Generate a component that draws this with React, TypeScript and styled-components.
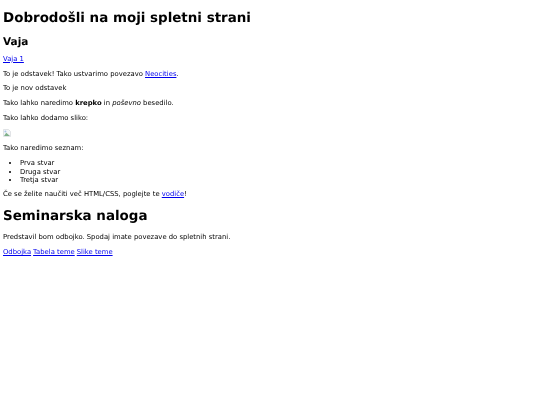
import React from 'react'
import styled, { createGlobalStyle } from 'styled-components'

const GlobalStyle = createGlobalStyle`
html, body {
  margin: 0;
  background: #fff;
}
`

const Page = styled.div`
padding: 0 3px;
font-family: "DejaVu Sans", sans-serif;
font-size: 6.82px;
line-height: 8px;
color: #000;
text-rendering: geometricPrecision;
will-change: transform;
`

const Title = styled.h1`
font-size: 13.45px;
line-height: 16px;
font-weight: bold;
margin: 11px 0 8px;
`

const SubTitle = styled.h2`
font-size: 10.5px;
line-height: 12px;
font-weight: bold;
margin: 9px 0 0;
`

const Para = styled.p`
margin: 6.75px 0 0;
`

const Link = styled.a`
color: #0000ee;
text-decoration: underline;
`

const BrokenImage = styled.svg`
display: block;
width: 8px;
height: 9px;
`

const List = styled.ul`
margin: 6.75px 0 -1px;
padding: 0 0 0 17px;
`

const Item = styled.li`
line-height: 8.5px;
`

const LinkRow = styled.p`
margin: 6.75px 0 0;
display: flex;
gap: 2px;
`

const App = () => {
  return (
    <Page>
      <GlobalStyle />
      <Title>Dobrodošli na moji spletni strani</Title>
      <SubTitle>Vaja</SubTitle>
      <Para><Link href="#">Vaja 1</Link></Para>
      <Para>To je odstavek! Tako ustvarimo povezavo <Link href="#">Neocities</Link>.</Para>
      <Para>To je nov odstavek</Para>
      <Para>Tako lahko naredimo <b>krepko</b> in <i>poševno</i> besedilo.</Para>
      <Para>Tako lahko dodamo sliko:</Para>
      <Para>
        <BrokenImage viewBox="0 0 8 9">
          <path d="M0.5 0.5H5.5L7.5 2.5V7.5H0.5Z" fill="#f4f6f8" stroke="#c8ccd0" strokeWidth="0.5" />
          <path d="M1 7L3.2 3.8L7 7Z" fill="#7fb08a" />
          <circle cx="2.4" cy="2.4" r="1" fill="#a9c4e8" />
        </BrokenImage>
      </Para>
      <Para>Tako naredimo seznam:</Para>
      <List>
        <Item>Prva stvar</Item>
        <Item>Druga stvar</Item>
        <Item>Tretja stvar</Item>
      </List>
      <Para>Če se želite naučiti več HTML/CSS, poglejte te <Link href="#">vodiče</Link>!</Para>
      <Title>Seminarska naloga</Title>
      <Para>Predstavil bom odbojko. Spodaj imate povezave do spletnih strani.</Para>
      <LinkRow>
        <Link href="#">Odbojka</Link>
        <Link href="#">Tabela teme</Link>
        <Link href="#">Slike teme</Link>
      </LinkRow>
    </Page>
  )
}

export default App
